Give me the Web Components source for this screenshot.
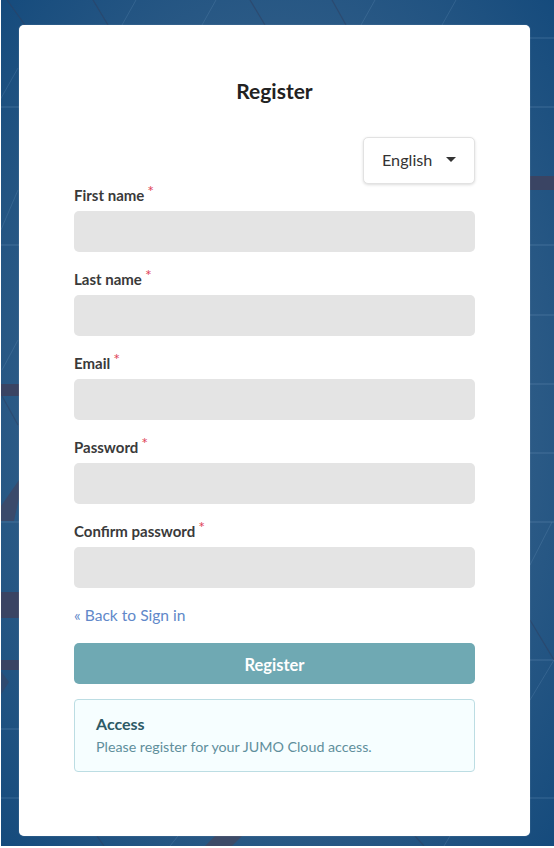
<!DOCTYPE html>
<html>
<head>
<meta charset="utf-8">
<title>Register</title>
<style>
  html, body { margin: 0; padding: 0; background: #fff; }
  body { font-family: Lato, "Open Sans", sans-serif; color: #333; }
</style>
</head>
<body>
<auth-page>
  <register-card>
    <form-field label="First name"></form-field>
    <form-field label="Last name"></form-field>
    <form-field label="Email"></form-field>
    <form-field label="Password"></form-field>
    <form-field label="Confirm password"></form-field>
  </register-card>
</auth-page>

<script>
class AuthPage extends HTMLElement {
  constructor() {
    super();
    this.attachShadow({ mode: "open" });
    this.shadowRoot.innerHTML = `
      <style>
        :host { display: grid; width: 554px; height: 848px; padding: 0 0 2px 1px; box-sizing: border-box; overflow: hidden; }
        svg { grid-area: 1 / 1; display: block; }
        .front { grid-area: 1 / 1; padding: 25px 23px 10px 18px; display: flex; }
      </style>
      <svg width="553" height="846" viewBox="1 0 553 846">
        <defs>
          <radialGradient id="sky" cx="0.5" cy="0.5" r="0.72">
            <stop offset="0" stop-color="#35628b"/>
            <stop offset="0.55" stop-color="#315e88"/>
            <stop offset="1" stop-color="#144a7c"/>
          </radialGradient>
        </defs>
        <rect x="0" y="0" width="554" height="846" fill="url(#sky)"/>
        <g fill="#3a4463">
          <rect x="530" y="176" width="24" height="14"/>
          <rect x="0" y="384" width="19" height="12"/>
          <rect x="0" y="592" width="19" height="26"/>
          <rect x="0" y="660" width="19" height="10"/>
          <polygon points="19,480 19,498 14,521 1,521 1,506" fill="#3a4a6b"/>
          <polygon points="0,670 9,682 0,696" fill="#2e4a70"/>
          <polygon points="215,836 242,836 232,846 205,846" fill="#3d4b68"/>
        </g>
        <g stroke="#7ea3c6" stroke-opacity=".32" stroke-width="1" fill="none">
          <path d="M530 38H554M530 107H554M530 245H554M530 315H554M530 384H554M530 453H554M530 522H554M530 660H554M530 798H554"/>
          <path d="M0 107H19M0 245H19M0 522H19M0 729H19M0 798H19"/>
        </g>
        <g stroke="#7ea3c6" stroke-opacity=".2" stroke-width="1" fill="none">
          <path d="M136 0L122 25M216 0L202 25M375 0L361 25M456 0L442 25"/>
          <path d="M18 68L0 100M18 190L0 232M18 340L2 370"/>
          <path d="M552 522L530 565M554 660L530 700"/>
          <path d="M178 836L170 846M450 836L444 846"/>
        </g>
        <g stroke="#2f3f60" stroke-opacity=".55" stroke-width="1.2" fill="none">
          <path d="M93 0L108 25M250 0L265 25M332 0L346 25M7 0L25 25"/>
          <path d="M2 396L18 425"/>
          <path d="M530 620L554 660"/>
          <path d="M97 836L104 846M415 836L424 846"/>
        </g>
      </svg>
      <div class="front"><slot></slot></div>
    `;
  }
}

class RegisterCard extends HTMLElement {
  constructor() {
    super();
    this.attachShadow({ mode: "open" });
    this.shadowRoot.innerHTML = `
      <style>
        :host { display: block; width: 511px; height: 811px; box-sizing: border-box; background: #fff; border-radius: 5px; padding: 0 55px; box-shadow: 0 0 1px rgba(255,255,255,.6); }
        h1 { margin: 0; padding-top: 53px; height: 112px; box-sizing: border-box; text-align: center; font: 700 21px/26px Lato, sans-serif; color: #222; }
        .lang { display: flex; justify-content: flex-end; height: 0; }
        .fields { display: flex; flex-direction: column; gap: 15px; padding-top: 46px; }
        a { display: block; margin-top: 17px; font: 15.6px/20px Lato, sans-serif; color: #6188c9; text-decoration: none; }
        button {
          display: block; width: 100%; height: 41px; margin-top: 18px; padding: 2px 0 0; border: 0; border-radius: 5px;
          background: #6fa9b3; color: #fff; font: 700 16.5px Lato, sans-serif;
        }
        .note {
          margin-top: 15px; height: 73px; box-sizing: border-box; padding: 14px 21px;
          border: 1px solid #bcdde3; border-radius: 4px; background: #f6feff;
        }
        .note b { display: block; font: 700 16px/20px Lato, sans-serif; color: #2c5a66; }
        .note p { margin: 4px 0 0; font: 14.25px/18px Lato, sans-serif; color: #5f8f9c; }
      </style>
      <h1>Register</h1>
      <div class="lang"><lang-select></lang-select></div>
      <div class="fields"><slot></slot></div>
      <a href="#">« Back to Sign in</a>
      <button type="button">Register</button>
      <div class="note">
        <b>Access</b>
        <p>Please register for your JUMO Cloud access.</p>
      </div>
    `;
  }
}

class LangSelect extends HTMLElement {
  constructor() {
    super();
    this.attachShadow({ mode: "open" });
    this.shadowRoot.innerHTML = `
      <style>
        :host {
          display: flex; align-items: center; justify-content: space-between; box-sizing: border-box;
          width: 112px; height: 47px; padding: 0 18px 2px 18px; background: #fff; border: 1px solid #e2e2e2;
          border-radius: 5px; box-shadow: 0 1px 3px rgba(0,0,0,.14); font: 16.2px Lato, sans-serif; color: #333;
        }
        i { width: 0; height: 0; border: 5px solid transparent; border-top-color: #333; border-bottom: 0; }
      </style>
      <span>English</span><i></i>
    `;
  }
}

class FormField extends HTMLElement {
  constructor() {
    super();
    this.attachShadow({ mode: "open" });
  }

  connectedCallback() {
    this.shadowRoot.innerHTML = `
      <style>
        :host { display: block; }
        label { display: block; height: 28px; box-sizing: border-box; padding-top: 2px; font: 700 15px/20px Lato, sans-serif; color: #3a3a3a; }
        sup { color: #e0455a; font-size: 16px; font-weight: 400; line-height: 0; margin-left: 3px; vertical-align: 4px; }
        input { display: block; width: 100%; height: 41px; box-sizing: border-box; border: 0; border-radius: 5px; background: #e4e4e4; }
      </style>
      <label>${this.getAttribute("label")}<sup>*</sup></label>
      <input type="text">
    `;
  }
}

customElements.define("auth-page", AuthPage);
customElements.define("register-card", RegisterCard);
customElements.define("lang-select", LangSelect);
customElements.define("form-field", FormField);
</script>
</body>
</html>
